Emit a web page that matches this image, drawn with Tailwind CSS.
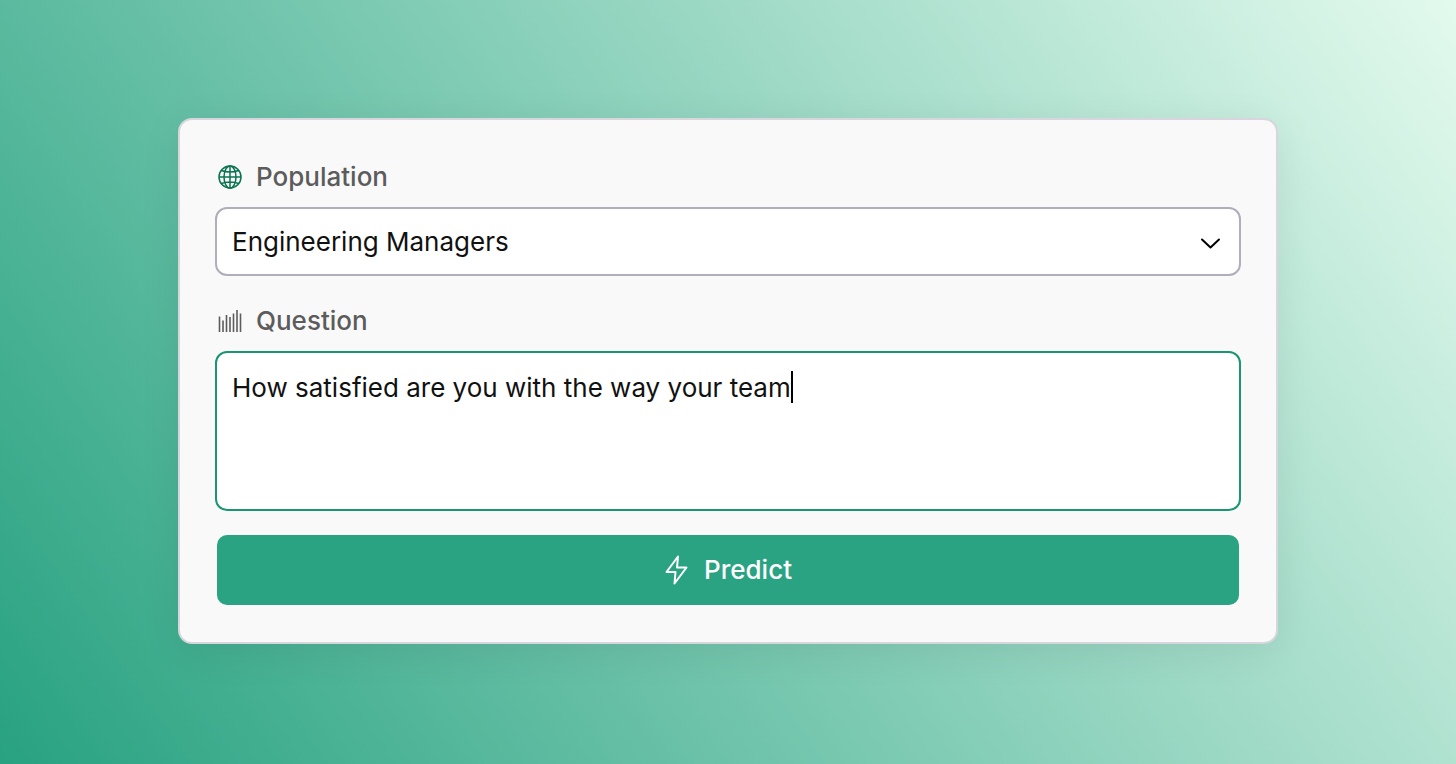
<!DOCTYPE html>
<html lang="en">
  <head>
    <meta charset="UTF-8" />
    <meta name="viewport" content="width=device-width, initial-scale=1.0" />
    <title>Predict</title>
    <script src="https://cdn.jsdelivr.net/npm/@tailwindcss/browser@4"></script>
  </head>
  <body class="min-h-screen flex flex-col bg-linear-[55deg,#28a281,#e3faee] font-['Inter',sans-serif] text-[26px] leading-8 px-[178px] pt-[118px] pb-8">
    <form class="w-full bg-[#f9f9f9] border-2 border-[#d6d6dc] rounded-[14px] px-[35px] pt-[41px] pb-[37px] shadow-[0_8px_40px_rgba(0,0,0,0.08)]">
      <label for="population" class="flex items-center gap-3.5 pl-[3px] font-medium text-[#5c5c5c]">
        <!-- globe -->
        <svg class="w-6 h-6 text-[#0b7350]" viewBox="0 0 24 24" fill="none" stroke="currentColor" stroke-width="1.5" aria-hidden="true">
          <circle cx="12" cy="12" r="11" />
          <ellipse cx="12" cy="12" rx="6" ry="11" />
          <path d="M12 1v22M1 12h22M3.500 5.500c4.500 2 12.500 2 17 0M3.500 18.500c4.500-2 12.500-2 17 0" />
        </svg>
        Population
      </label>
      <div class="relative mt-3.5">
        <select id="population" class="block w-full h-[69px] appearance-none bg-white border-2 border-[#b0aebb] rounded-xl px-[15px] text-[#111]">
          <option>Engineering Managers</option>
        </select>
        <svg class="absolute right-5 top-6 w-6 h-6 pointer-events-none text-black" viewBox="0 0 24 24" fill="none" stroke="currentColor" stroke-width="2" stroke-linecap="round" stroke-linejoin="round" aria-hidden="true">
          <path d="M5 8.500L13.500 16.500L22 8.500" />
        </svg>
      </div>

      <label for="question" class="flex items-center gap-3.5 pl-[3px] mt-[29px] font-medium text-[#5c5c5c]">
        <!-- bars -->
        <svg class="w-6 h-6" viewBox="0 0 24 24" fill="none" stroke="currentColor" stroke-width="1.6" aria-hidden="true">
          <path d="M1.500 7.500v15.500M5 11.500v11.500M8.500 6v17M12 8v15M15.500 4.500v18.500M19 1v22M22.500 4.500v18.500" />
        </svg>
        Question
      </label>
      <div class="relative mt-3.5">
        <textarea id="question" class="block w-full h-40 resize-none bg-white border-2 border-[#1a9673] rounded-xl px-[15px] py-[19px] text-[#111] outline-none caret-transparent">How satisfied are you with the way your team</textarea>
        <!-- text cursor after the last word -->
        <div class="absolute inset-x-[17px] top-5 pointer-events-none" aria-hidden="true">
          <span class="inline-block border-r-2 border-black text-transparent select-none">How satisfied are you with the way your team</span>
        </div>
      </div>

      <div class="px-0.5 mt-6">
        <button type="button" class="w-full h-[70px] flex items-center justify-center gap-4 rounded-[10px] bg-[#2aa383] text-white font-medium">
          <svg class="w-6 h-8" viewBox="0 0 24 32" fill="none" stroke="currentColor" stroke-width="2" stroke-linejoin="round" aria-hidden="true">
            <path d="M14 2.500L2.500 18h9L10.500 29.500L22.500 13.500h-9.500z" />
          </svg>
          Predict
        </button>
      </div>
    </form>
  </body>
</html>
